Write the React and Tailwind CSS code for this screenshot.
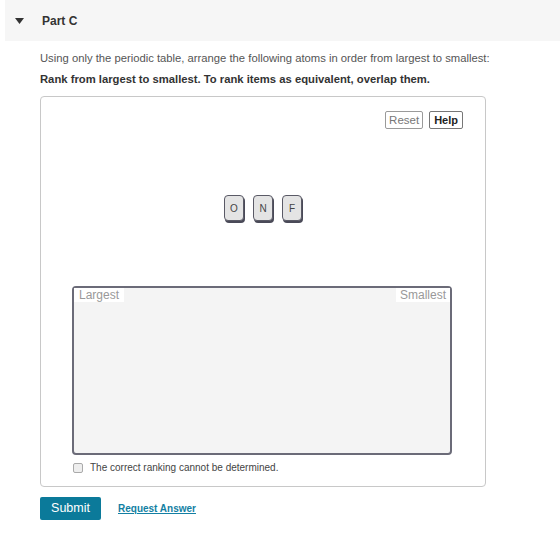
import React from "react";

function Tile({ label }) {
  return (
    <div className="w-[20px] h-[26px] rounded-[4px] bg-[#e4e4e4] border border-[#5a5a66] shadow-[1px_2px_0_#4a4a58] flex items-center justify-center text-[10px] text-[#444]">
      {label}
    </div>
  );
}

export default function App() {
  return (
    <div className="w-[560px] h-[537px] bg-white font-['Liberation_Sans',Arial,sans-serif]">
      {/* section header */}
      <div className="ml-[5px] h-[41px] bg-[#f6f6f6] flex items-center">
        <svg width="9" height="6" viewBox="0 0 9 6" className="ml-[10px] mt-[1px]">
          <path d="M0 0 H9 L4.5 6 Z" fill="#333" />
        </svg>
        <span className="ml-[18px] text-[12px] font-bold text-[#333]">Part C</span>
      </div>

      <div className="pl-[40px] pr-[74px]">
        <p className="mt-[9px] text-[11.25px] leading-[16px] text-[#555] whitespace-nowrap">
          Using only the periodic table, arrange the following atoms in order from largest to smallest:
        </p>
        <p className="mt-[5px] text-[11.25px] leading-[16px] font-bold text-[#333] whitespace-nowrap">
          Rank from largest to smallest. To rank items as equivalent, overlap them.
        </p>

        {/* ranking widget */}
        <div className="mt-[9px] w-[446px] h-[391px] border border-[#c8c8c8] rounded-[4px] flex flex-col">
          <div className="flex justify-end gap-[6px] pt-[14px] pr-[22px]">
            <button className="h-[18px] px-[3px] border border-[#9a9a9a] rounded-[2px] bg-white text-[11.5px] leading-[16px] text-[#777]">
              Reset
            </button>
            <button className="h-[18px] px-[4px] border border-[#777] rounded-[2px] bg-white text-[11px] leading-[16px] font-bold text-[#222]">
              Help
            </button>
          </div>

          <div className="mt-[66px] flex justify-center gap-[9px]">
            <Tile label="O" />
            <Tile label="N" />
            <Tile label="F" />
          </div>

          <div className="mt-[65px] ml-[31px] w-[380px] h-[169px] border-2 border-[#6b6b78] rounded-[4px] bg-[#f4f4f4] flex justify-between items-start">
            <span className="bg-white px-[5px] text-[12px] leading-[14px] text-[#999]">Largest</span>
            <span className="bg-white px-[4px] text-[12px] leading-[14px] text-[#999]">Smallest</span>
          </div>

          <label className="mt-[5px] ml-[32px] flex items-center gap-[7px]">
            <span className="w-[10px] h-[10px] border border-[#aaa] rounded-[2px] bg-[#eee]" />
            <span className="text-[10px] text-[#444]">The correct ranking cannot be determined.</span>
          </label>
        </div>

        <div className="mt-[10px] flex items-center">
          <button className="w-[61px] h-[23px] rounded-[2px] bg-[#0b7a9a] text-white text-[12.5px]">
            Submit
          </button>
          <a href="#" className="ml-[17px] text-[10px] font-bold text-[#137fa3] underline">
            Request Answer
          </a>
        </div>
      </div>
    </div>
  );
}
